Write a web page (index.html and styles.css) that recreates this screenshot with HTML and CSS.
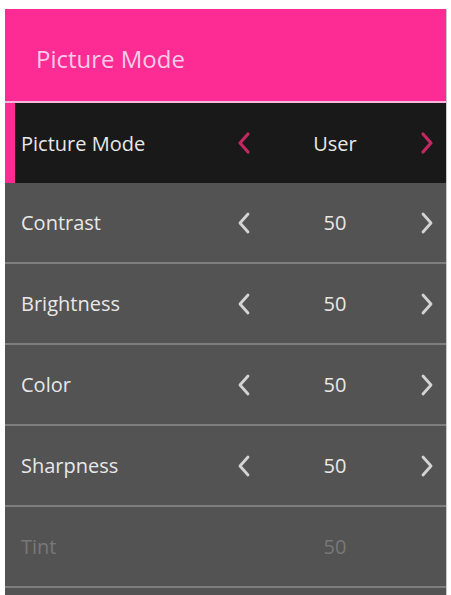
FILE: index.html
```html
<!DOCTYPE html>
<html lang="en">
<head>
    <meta charset="UTF-8">
    <meta name="viewport" content="width=device-width, initial-scale=1.0">
    <title>Picture Mode</title>
    <link rel="stylesheet" href="styles.css">
</head>
<body>

    <div class="menu">
        <div class="menu-title">Picture Mode</div>

        <div class="row row-active">
            <span class="label">Picture Mode</span>
            <svg class="arrow" width="16" height="24" viewBox="0 0 16 24"><polyline points="12,3 4,12 12,21"/></svg>
            <span class="value">User</span>
            <svg class="arrow" width="16" height="24" viewBox="0 0 16 24"><polyline points="4,3 12,12 4,21"/></svg>
        </div>

        <div class="row">
            <span class="label">Contrast</span>
            <svg class="arrow" width="16" height="24" viewBox="0 0 16 24"><polyline points="12,3 4,12 12,21"/></svg>
            <span class="value">50</span>
            <svg class="arrow" width="16" height="24" viewBox="0 0 16 24"><polyline points="4,3 12,12 4,21"/></svg>
        </div>

        <div class="row">
            <span class="label">Brightness</span>
            <svg class="arrow" width="16" height="24" viewBox="0 0 16 24"><polyline points="12,3 4,12 12,21"/></svg>
            <span class="value">50</span>
            <svg class="arrow" width="16" height="24" viewBox="0 0 16 24"><polyline points="4,3 12,12 4,21"/></svg>
        </div>

        <div class="row">
            <span class="label">Color</span>
            <svg class="arrow" width="16" height="24" viewBox="0 0 16 24"><polyline points="12,3 4,12 12,21"/></svg>
            <span class="value">50</span>
            <svg class="arrow" width="16" height="24" viewBox="0 0 16 24"><polyline points="4,3 12,12 4,21"/></svg>
        </div>

        <div class="row">
            <span class="label">Sharpness</span>
            <svg class="arrow" width="16" height="24" viewBox="0 0 16 24"><polyline points="12,3 4,12 12,21"/></svg>
            <span class="value">50</span>
            <svg class="arrow" width="16" height="24" viewBox="0 0 16 24"><polyline points="4,3 12,12 4,21"/></svg>
        </div>

        <div class="row row-disabled">
            <span class="label">Tint</span>
            <span></span>
            <span class="value">50</span>
            <span></span>
        </div>

        <div class="row"></div>
    </div>

</body>
</html>
```

FILE: styles.css
```css
body {
    margin: 0;
    background-color: #ffffff;
    font-family: 'Open Sans', 'DejaVu Sans', sans-serif;
    height: 595px;
    overflow: hidden;
}

.menu {
    width: 441px;
    margin: 9px 0 0 5px;
    background-color: #535353;
    border-right: 1px solid #c8c8c8;
}

.menu-title {
    height: 94px;
    box-sizing: border-box;
    padding: 6px 0 0 31px;
    background-color: #fd2b94;
    color: #f9cbe8;
    font-size: 24px;
    display: flex;
    align-items: center;
    border-bottom: 2px solid #f3b8da;
}

.row {
    display: grid;
    grid-template-columns: 1fr 24px 158px 26px;
    align-items: center;
    height: 81px;
    box-sizing: border-box;
    padding: 0 6px 0 16px;
    border-bottom: 2px solid #7e7e7e;
    color: #e8e8e8;
    font-size: 20px;
}

.row-active {
    height: 80px;
    background-color: #191919;
    border-left: 10px solid #fd2b94;
    border-bottom: none;
    padding-left: 6px;
}

.value {
    text-align: center;
}

.arrow {
    justify-self: center;
}

.arrow polyline {
    fill: none;
    stroke: #d4d4d4;
    stroke-width: 2.8;
    stroke-linecap: round;
    stroke-linejoin: round;
}

.row-active .arrow polyline {
    stroke: #c4285f;
    stroke-width: 3.2;
}

.row-disabled {
    color: #787878;
}
```
